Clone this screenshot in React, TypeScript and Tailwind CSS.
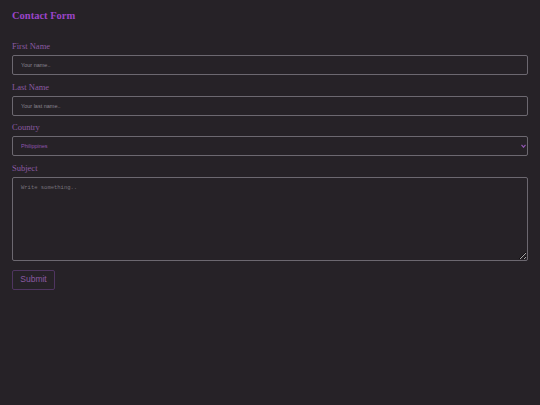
import React from 'react';

export default function App() {
  return (
    <div className="min-h-[405px] w-full bg-[#262227] px-3 pt-[10px] pb-6">
      <h1 className="text-[10.5px] leading-[12px] font-bold text-[#9b45c8] font-['Liberation_Serif',serif]">
        Contact Form
      </h1>

      <form className="mt-[19px] flex flex-col" onSubmit={(e) => e.preventDefault()}>
        <label className="text-[8.5px] leading-[10px] text-[#8a5aa2] font-['Liberation_Serif',serif]">
          First Name
        </label>
        <input
          type="text"
          placeholder="Your name.."
          className="mt-1 block h-5 w-full rounded-[2px] border border-[#6c6870] bg-[#262227] px-2 text-[5.5px] text-[#b9b4bd] placeholder-[#8a8590] font-['Liberation_Sans',sans-serif] outline-none" />

        <label className="mt-[6.5px] text-[8.5px] leading-[10px] text-[#8a5aa2] font-['Liberation_Serif',serif]">
          Last Name
        </label>
        <input
          type="text"
          placeholder="Your last name.."
          className="mt-1 block h-5 w-full rounded-[2px] border border-[#6c6870] bg-[#262227] px-2 text-[5.5px] text-[#b9b4bd] placeholder-[#8a8590] font-['Liberation_Sans',sans-serif] outline-none" />

        <label className="mt-[6.5px] text-[8.5px] leading-[10px] text-[#8a5aa2] font-['Liberation_Serif',serif]">
          Country
        </label>
        <div className="relative mt-1 h-5">
          <select
            defaultValue="Philippines"
            className="block h-5 w-full appearance-none rounded-[2px] border border-[#6c6870] bg-[#262227] px-2 text-[5.5px] text-[#8f55b0] font-['Liberation_Sans',sans-serif] outline-none">
            <option>Philippines</option>
            <option>Japan</option>
            <option>USA</option>
          </select>
          <svg
            className="pointer-events-none absolute right-[2px] top-[8px] h-[4px] w-[5px]"
            viewBox="0 0 5 4">
            <path d="M0.5 0.8 L2.5 3.2 L4.5 0.8" fill="none" stroke="#8f55b0" strokeWidth="1.2" />
          </svg>
        </div>

        <label className="mt-[6.5px] text-[8.5px] leading-[10px] text-[#8a5aa2] font-['Liberation_Serif',serif]">
          Subject
        </label>
        <textarea
          placeholder="Write something.."
          className="mt-1 block h-[84px] w-full rounded-[2px] border border-[#6c6870] bg-[#262227] px-2 py-[6px] text-[5.5px] text-[#b9b4bd] placeholder-[#77737c] font-['Liberation_Mono',monospace] outline-none" />

        <div className="mt-[9px] flex">
          <button
            type="submit"
            className="block h-5 w-[43px] rounded-[2px] border border-[#4f3560] bg-[#262227] text-[8.5px] text-[#8a5aa2] font-['Liberation_Sans',sans-serif]">
            Submit
          </button>
        </div>
      </form>
    </div>);

}
